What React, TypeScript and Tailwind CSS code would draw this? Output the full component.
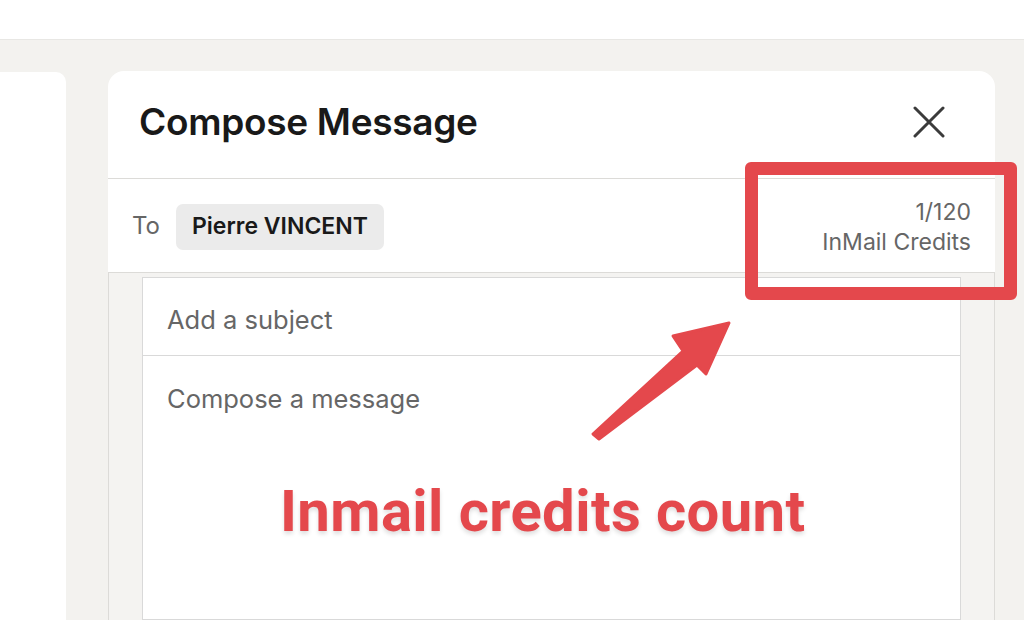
import React from "react";

export default function App() {
  return (
    <div
      className="relative w-[1024px] h-[620px] overflow-hidden bg-[#f3f2ef] flex flex-col"
      style={{ fontFamily: "Inter, 'Liberation Sans', Arial, sans-serif" }}
    >
      {/* top bar */}
      <div className="h-[40px] shrink-0 bg-white border-b border-[#e8e7e4]" />

      {/* main */}
      <div className="flex flex-1 pt-[31px] gap-[42px] min-h-0">
        <div className="w-[66px] shrink-0 mt-[1px] bg-white rounded-tr-[10px]" />

        <div className="w-[887px] shrink-0 bg-white rounded-t-2xl flex flex-col">
          {/* header */}
          <div className="h-[108px] shrink-0 flex items-center justify-between pl-[31px] pr-[50px] border-b border-[#dcdbd8]">
            <h1 className="text-[37px] font-semibold text-[#191919] tracking-[-0.3px] mt-[-6px]">
              Compose Message
            </h1>
            <svg width="32" height="32" viewBox="0 0 32 32" className="mt-[-6px]">
              <path d="M2 2 L30 30 M30 2 L2 30" stroke="#3b3b3b" strokeWidth="3" strokeLinecap="round" />
            </svg>
          </div>

          {/* To row */}
          <div className="h-[94px] shrink-0 flex items-center justify-between pl-[24px] pr-[24px] border-b border-[#dcdbd8]">
            <div className="flex items-center gap-[16px]">
              <span className="text-[24px] text-[#666666]">To</span>
              <span className="h-[46px] mt-[2px] flex items-center px-[16px] rounded-[7px] bg-[#ebebeb] text-[23px] font-semibold text-[#191919]">
                Pierre VINCENT
              </span>
            </div>
            <div className="flex flex-col items-end text-[23px] leading-[30px] text-[#666666] mt-[2px]">
              <span>1/120</span>
              <span>InMail Credits</span>
            </div>
          </div>

          {/* body */}
          <div className="flex-1 bg-[#f4f3f1] border-x border-[#dcdbd8] px-[33px] pt-[4px] flex flex-col">
            <div className="flex-1 bg-white border border-[#d9d9d9] flex flex-col">
              <div className="h-[78px] shrink-0 flex items-center pl-[24px] pt-[7px] border-b border-[#d9d9d9] text-[25.5px] text-[#666666]">
                Add a subject
              </div>
              <div className="pl-[24px] pt-[26px] text-[25.5px] leading-[34px] text-[#666666]">
                Compose a message
              </div>
              <div className="mt-[52px] pl-[137px]">
                <span
                  className="text-[58px] font-bold text-[#e4484c] tracking-[0.4px]"
                  style={{ fontFamily: "Roboto, 'Liberation Sans', sans-serif", textShadow: "0 3px 4px rgba(0,0,0,0.13)" }}
                >
                  Inmail credits count
                </span>
              </div>
            </div>
          </div>
        </div>
      </div>

      {/* annotation rectangle */}
      <div className="absolute left-[745px] top-[162px] w-[272px] h-[138px] border-[13px] border-[#e4484c] rounded-[6px]" />

      {/* annotation arrow */}
      <svg className="absolute left-0 top-0 pointer-events-none" width="1024" height="620">
        <polygon
          points="593,434 683,351 673,336 729,323 706,374 697,365 599,439"
          fill="#e4484c"
          stroke="#e4484c"
          strokeWidth="3"
          strokeLinejoin="round"
        />
      </svg>
    </div>
  );
}
